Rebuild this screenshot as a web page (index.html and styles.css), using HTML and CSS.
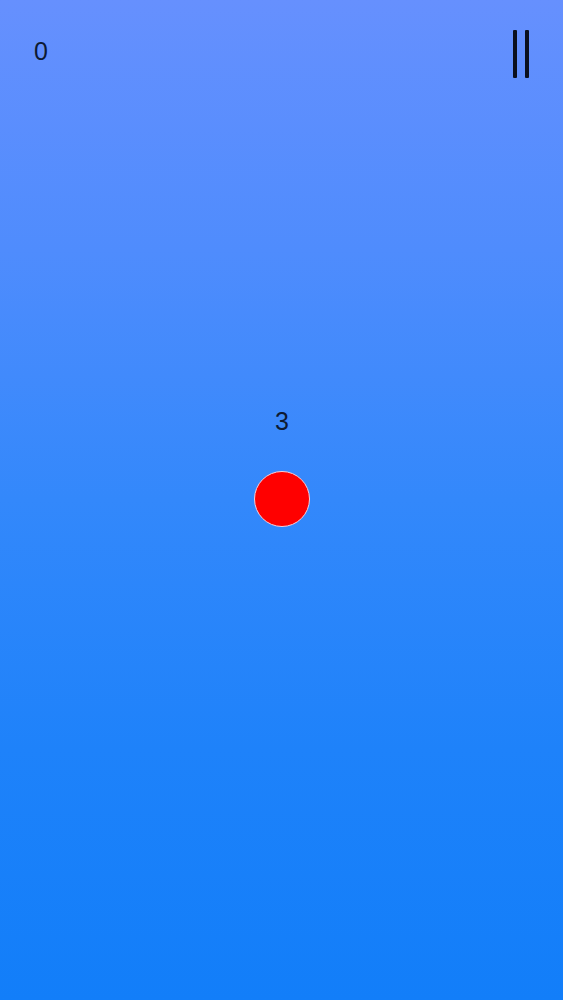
FILE: index.html
```html
<!DOCTYPE html>
<html>
<head>
<meta charset="utf-8">
<link rel="stylesheet" href="styles.css">
</head>
<body>
<div class="screen">
  <div class="topbar">
    <div class="score">0</div>
    <div class="pause"><span class="bar"></span><span class="bar"></span></div>
  </div>
  <div class="center">
    <div class="count">3</div>
    <div class="ball"></div>
  </div>
</div>
</body>
</html>
```
FILE: styles.css
```css
html, body {
  margin: 0;
  padding: 0;
}
.screen {
  width: 563px;
  height: 1000px;
  background: linear-gradient(180deg, #6690fe 0%, #4f8cfd 25%, #3388fb 50%, #1e82fa 75%, #127ef9 100%);
  font-family: "Liberation Sans", Arial, sans-serif;
  color: #0d1a33;
  display: flex;
  flex-direction: column;
  box-sizing: border-box;
}
.topbar {
  display: flex;
  justify-content: space-between;
  align-items: flex-start;
  padding: 30px 34px 0 34px;
}
.score {
  font-size: 25px;
  line-height: 28px;
  margin-top: 7px;
}
.pause {
  display: flex;
  gap: 8px;
}
.bar {
  width: 4px;
  height: 48px;
  background: #0a0f1e;
  border-radius: 1px;
}
.center {
  display: flex;
  flex-direction: column;
  align-items: center;
  margin-top: 329px;
}
.count {
  font-size: 25px;
  line-height: 28px;
  margin-left: 1px;
}
.ball {
  width: 54px;
  height: 54px;
  border-radius: 50%;
  background: #ff0000;
  border: 1px solid #f4d0dc;
  margin-top: 36px;
}
```
